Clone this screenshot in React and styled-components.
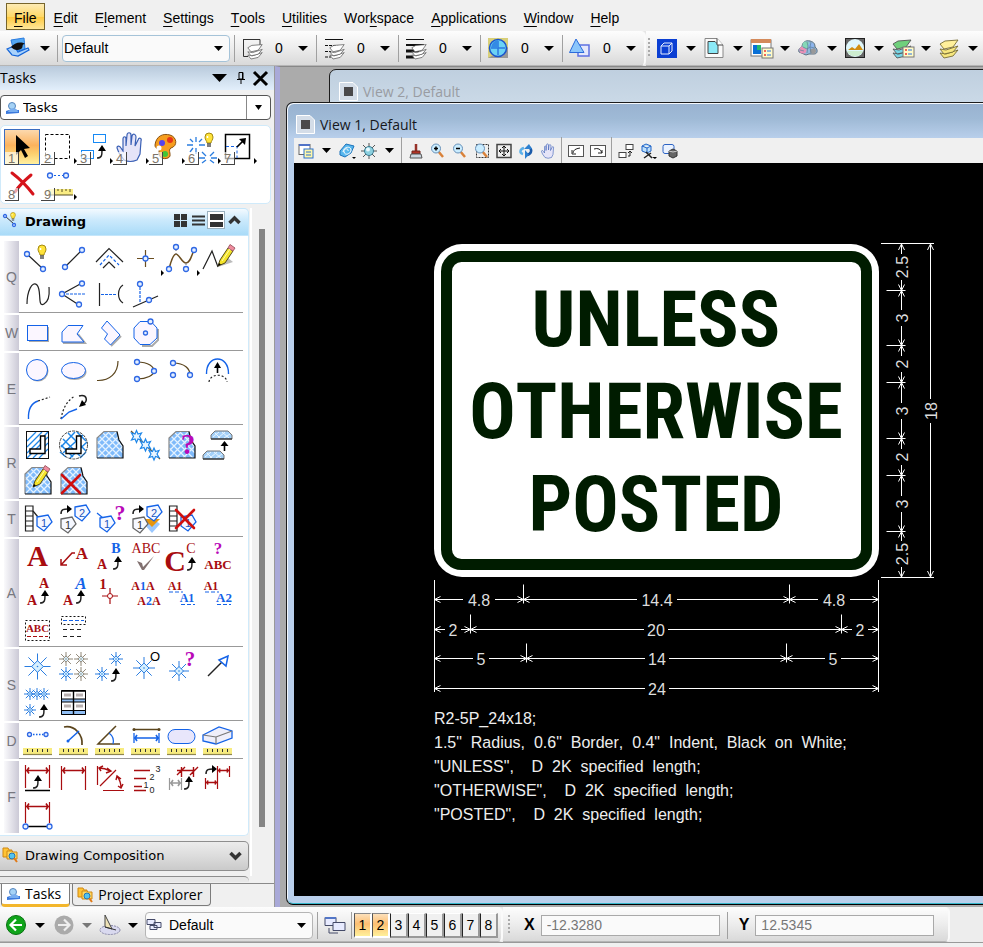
import React from 'react';
import styled, { createGlobalStyle } from 'styled-components';

const Global = createGlobalStyle`
  * { box-sizing: border-box; }
  body { margin: 0; background: #f0f0f0; color: #000; font: 14px/18px "Liberation Sans", Arial, sans-serif; font-kerning: none; overflow: hidden; }
  button, select, input { font: inherit; font-kerning: inherit; color: inherit; margin: 0; }
  button { border: 0; padding: 0; background: none; cursor: default; }
  svg { display: block; flex: none; overflow: visible; }
`;

const BLUE = '#1463e8';
const RED = '#a80d10';

/* ---------- layout ---------- */
const Page = styled.div`display: flex; flex-direction: column; height: 100vh; overflow: hidden;`;
const MenuBar = styled.nav`display: flex; gap: 1px; height: 31px; padding: 3px 0 1px 6px; background: #f0f0f0;`;
const MenuItem = styled.button`
  padding: 1px 7px 0; border: 1px solid ${p => (p.$active ? '#77652c' : 'transparent')};
  background: ${p => (p.$active ? 'linear-gradient(#fdebb5, #ffd968 50%, #fec93f 52%, #ffe79a)' : 'none')};
  line-height: 26px;
  u { text-underline-offset: 3px; }
`;
const ToolStrip = styled.div`display: flex; height: 35px; flex: none; background: #e6e6e6; overflow: hidden;`;
const Strip = styled.div`
  display: flex; align-items: center; flex: none; padding: ${p => p.$top || 0}px ${p => p.$end || 0}px 0 ${p => p.$pad || 0}px;
  background: linear-gradient(#fdfdfd, #ededed 50%, #d9d9d9); border-bottom: 1px solid #b5b5b5;
  border-right: 2px solid #fafafa; border-radius: 0 5px 5px 0; flex-grow: ${p => (p.$grow ? 1 : 0)};
`;
const Bar = styled.i`width: 1px; height: 27px; background: #a0a0a0; flex: none; margin: ${p => p.$m || '0'};`;
const Grip = styled.i`width: 2px; height: 20px; margin-left: ${p => p.$left || 0}px; flex: none; background: repeating-linear-gradient(#aaa 0 2px, transparent 2px 4px);`;
const IconButton = styled.button`display: flex; align-items: center; justify-content: center; width: ${p => p.$w || 22}px; height: 24px; flex: none;`;
const Attr = styled.button`display: flex; align-items: center; width: 81px; height: 27px; padding-left: 6px; flex: none;
  span { width: 35px; padding-left: 12px; text-align: left; }`;
const Drop = styled.button`display: flex; align-items: center; width: 47px; height: 27px; gap: 7px; flex: none;`;
const PrimaryRow = styled.div`display: flex; margin-left: 7px;`;
const SelectWrap = styled.div`
  position: relative; display: flex; align-items: center; flex: none; width: ${p => p.$w}px; height: 27px;
  margin-left: ${p => p.$gap || 0}px; border: 1px solid ${p => p.$c || '#a9c1d6'}; border-radius: 4px; background: #fafafa;
  & > svg:last-child { position: absolute; right: 6px; pointer-events: none; }
  select { appearance: none; border: 0; outline: 0; background: transparent; flex: 1; height: 25px; padding: 0 20px 0 ${p => p.$left || 1}px; }
`;
const Body = styled.div`display: flex; flex: 1; min-height: 0;`;

/* ---------- task pane ---------- */
const Pane = styled.aside`display: flex; flex-direction: column; width: 275px; flex: none; border-right: 1px solid #999; background: #f0f0f0; overflow: hidden;`;
const PaneTitle = styled.header`
  display: flex; align-items: center; height: 24px; flex: none; background: linear-gradient(#b9cadc, #e2effb);
  font: 14px/22px "Open Sans", sans-serif; padding-right: 5px;
  h2 { font: inherit; margin: 0; flex: 1; }
`;
const Combo = styled.div`
  position: relative; display: flex; align-items: center; height: 25px; margin: 5px 3px 5px 0; padding-left: 4px; flex: none;
  border: 1px solid #555; border-radius: 4px; background: #fff;
  font: 13px "DejaVu Sans", Verdana, sans-serif;
  select { appearance: none; border: 0; outline: 0; background: none; flex: 1; padding: 0 0 0 3px; }
  i { width: 24px; height: 23px; border-left: 1px solid #888; display: flex; align-items: center; justify-content: center; pointer-events: none; }
`;
const Shelf = styled.div`
  display: grid; grid-template-columns: repeat(7, 36px); grid-auto-rows: 36px; margin: 0 3px 4px 0; padding: 3px; flex: none; height: 79px;
  background: #fff; border: 1px solid #d0eafa; border-radius: 5px;
`;
const ShelfTool = styled.button`
  position: relative; width: 36px; height: 36px; border: 1px solid ${p => (p.$on ? '#3a6cc0' : 'transparent')};
  background: ${p => (p.$on ? 'linear-gradient(#fcd9ae, #fcb25d 45%, #fdd06f 70%, #fff0a0)' : 'none')};
  svg { margin: -1px; }
  span { position: absolute; left: 0; bottom: -1px; width: 14px; height: 13px; background: #ffffffa0; border: solid #444; border-width: 0 1px 1px 0;
    color: #7c7468; font-size: 13px; line-height: 13px; }
`;
const Scroll = styled.div`display: flex; flex: 1; min-height: 0; overflow: hidden;`;
const Boxes = styled.div`width: 249px; flex: none;`;
const Track = styled.div`flex: 1; border-left: 2px solid #fff; padding: 21px 0 0 7px; margin: 0 0 7px 1px;
  &::before { content: ''; display: block; width: 6px; height: 598px; background: #858585; }`;
const BoxHead = styled.header`
  display: flex; align-items: center; height: 28px; padding: 0 5px 4px 3px; border: 1px solid #c5e6fa; border-left: 0; border-radius: 0 5px 0 0;
  background: linear-gradient(#f3faff, #cdeafc 40%, #a9dbf8);
  h3 { flex: 1; margin: 3px 0 0 7px; font: bold 13px/22px "DejaVu Sans", Verdana, sans-serif; }
`;
const HeadButton = styled.button`
  display: flex; align-items: center; justify-content: center; width: 18px; height: 18px;
  border: 1px solid ${p => (p.$on ? '#9bb1bf' : 'transparent')}; background: ${p => (p.$on ? '#fff' : 'none')};
`;
const Groups = styled.div`padding: 5px 0 2px 4px; background: #fff; border: 1px solid #d0eafa; border-width: 0 1px 1px 0; border-radius: 0 0 5px 0;`;
const Group = styled.section`display: flex; width: 239px; border-bottom: ${p => (p.$last ? 0 : 2)}px solid #fff; box-shadow: ${p => (p.$last ? 'none' : 'inset 0 -1px #999')};`;
const Key = styled.div`display: flex; align-items: center; justify-content: center; width: 15px; color: #77777f; font-size: 14px; background: linear-gradient(90deg, #fafafc, #cbc9d6);`;
const Tools = styled.div`display: grid; grid-template-columns: repeat(6, 36px); grid-auto-rows: 36px;`;
const Tool = styled.button`width: 36px; height: 36px;`;
const Collapsed = styled.button`
  display: flex; align-items: center; width: 249px; height: 30px; margin-top: 5px; padding: 0 6px 2px 2px; text-align: left;
  border: 1px solid #8e8e8e; border-left: 0; border-radius: 0 5px 5px 0; background: linear-gradient(#ececec, #dcdcdc 50%, #cacaca);
  font: 13px "DejaVu Sans", Verdana, sans-serif;
  span { flex: 1; padding-left: 6px; }
`;
const Peek = styled.div`height: 6px; margin-top: 5px; border-top: 1px solid #8e8e8e; border-radius: 0 5px 0 0; background: #e8e8e8;`;
const Tabs = styled.div`display: flex; gap: 2px; height: 24px; flex: none; padding-left: 1px; border-top: 1px solid #8a8a8a;`;
const Tab = styled.button`
  display: flex; align-items: center; gap: 4px; height: 22px; padding: 0 8px 0 4px; font: 14px/20px "Open Sans", sans-serif;
  border: 1px solid #7c7c7c; border-top: 0; border-radius: 0 0 4px 4px;
  ${p => (p.$on ? 'background: #fff; height: 23px; border-bottom: 3px solid #f3b62c;' : 'background: #ececec;')}
`;

/* ---------- views ---------- */
const Desk = styled.main`position: relative; flex: 1; min-width: 0; background: #ababab; border-left: 5px solid #a9a9d8; overflow: hidden; border-top: 1px solid #888;`;
const View = styled.section`
  position: absolute; display: flex; flex-direction: column; right: -10px; border: 1px solid #1c1c1c; border-radius: 7px;
  ${p => (p.$back
    ? 'left: 49px; top: 2px; height: 60px; background: linear-gradient(#bfcfdf, #c9d8e6 50%, #d5e1ef);'
    : 'left: 6px; top: 35px; bottom: 2px; background: linear-gradient(#98b2d0, #9fbad6 16px, #bad0ec 36px); border-bottom-color: #000; box-shadow: inset 1px 1px #f4f8fc, inset 0 -1px #35b8cc; padding: 0 7px 8px;')}
`;
const ViewTitle = styled.header`
  display: flex; align-items: center; gap: 5px; height: 35px; flex: none; padding: ${p => (p.$back ? '8px 0 0 9px' : '8px 0 0 2px')};
  color: ${p => (p.$back ? '#999ca2' : '#16181c')}; font: 14px "Open Sans", sans-serif;
  h2 { font: inherit; margin: 0; }
`;
const ViewTools = styled.div`display: flex; align-items: center; height: 25px; flex: none; padding-left: 1px; background: #f0f0f0;`;
const Canvas = styled.div`flex: 1; min-height: 0; background: #000; padding: 72px 0 0 136px; overflow: hidden;`;
const Notes = styled.div`margin: 12px 0 0 4px; color: #eee; font-size: 16px; line-height: 24px; white-space: pre;
  p { margin: 0; }`;

/* ---------- status ---------- */
const Status = styled.footer`display: flex; height: 35px; flex: none; background: #ededed; overflow: hidden;`;
const Foot = styled.div`height: 5px; flex: none; border-top: 1px solid #999; background: #f0f0f0;`;
const ViewToggle = styled.button`
  width: 18px; height: 25px; flex: none; border: 1px solid; border-width: 1px 2px 2px 1px;
  border-color: ${p => (p.$on ? '#888 #fff #fff #555' : '#fff #999 #999 #222')};
  background: ${p => (p.$on ? 'linear-gradient(#fce0bb, #fdbf72 45%, #fff09a)' : '#f0f0f0')};
`;
const Coord = styled.label`display: flex; align-items: center; font-weight: bold; font-size: 16px; padding-left: ${p => p.$left}px;
  input { width: 179px; height: 21px; margin-left: 6px; padding: 0 5px; border: 1px solid #a9a9a9; background: #fafafa; color: #777; font-weight: normal; font-size: 14px; }`;

/* ---------- drawing primitives ---------- */
const Svg = ({ w = 36, h = w, box, children }) => (
  <svg width={w} height={h} viewBox={box || `0 0 ${w} ${h}`} fill="none" aria-hidden="true">{children}</svg>
);
const L = ({ d, c = '#222', w = 1.2, dash, f = 'none' }) => <path d={d} stroke={c} strokeWidth={w} strokeDasharray={dash} fill={f} />;
const N = ({ x, y, r = 2.5 }) => <circle cx={x} cy={y} r={r} fill="#e6f0ff" stroke="#2f68e4" strokeWidth="1.3" />;
const T = ({ x, y, s = 13, c = RED, f = 'Liberation Serif', b = 'bold', children }) => (
  <text x={x} y={y} fontSize={s} fontFamily={`"${f}", serif`} fontWeight={b} textAnchor="middle" fill={c}>{children}</text>
);
const Caret = ({ w = 9, c = '#000' }) => <svg width={w} height="5" viewBox="0 0 10 5" preserveAspectRatio="none" aria-hidden="true"><path d="M0 0H10L5 5Z" fill={c} /></svg>;
const Fly = () => <path d="M34 29l3 3-3 3z" fill="#000" />;
const Bulb = ({ x, y }) => (
  <g transform={`translate(${x} ${y})`}>
    <path d="M-2 4C-2 2-4 1-4-2a4 4 0 0 1 8 0C4 1 2 2 2 4Z" fill="#ffe33a" stroke="#a58a10" />
    <path d="M-1.5-3v2" stroke="#fff" strokeWidth="1.5" /><path d="M-2 5h4M-2 7h4" stroke="#555" strokeWidth="1.4" />
  </g>
);
const Pencil = ({ x, y }) => (
  <g transform={`translate(${x} ${y})`}>
    <path d="M0 0l2-6L10-18l5 3L7-3Z" fill="#f4e429" stroke="#544b1a" />
    <path d="M10-18l5 3 2-3-5-3.500Z" fill="#f08b9e" stroke="#a4606c" /><path d="M0 0l1-3 2 1.500Z" fill="#000" /><path d="M4-5l8-12" stroke="#fffbb0" />
  </g>
);
const Cross = ({ x, y, r = 9 }) => <path d={`M${x - r} ${y - r}L${x + r} ${y + r}M${x - r} ${y + r}L${x + r} ${y - r}`} stroke="#d0100f" strokeWidth="2.600" strokeLinecap="round" />;
const Up = ({ x, y }) => <g transform={`translate(${x} ${y})`}><path d="M-4 6C1 6 1 3 1-2" stroke="#222" strokeWidth="1.500" /><path d="M-3-1l4-6 4 6Z" fill="#000" /></g>;
const Right = ({ x, y }) => <g transform={`translate(${x} ${y})`}><path d="M-5 4C-5-1-2-1 2-1" stroke="#222" strokeWidth="1.500" /><path d="M1-5l5 4-5 4Z" fill="#000" /></g>;
const Star = ({ x, y, r = 7, c = '#2a7de0' }) => (
  <g transform={`translate(${x} ${y})`} stroke={c}>
    <path d={`M0${-r}V${r}M${-r} 0H${r}M${-r * 0.7} ${-r * 0.7}L${r * 0.7} ${r * 0.7}M${-r * 0.7} ${r * 0.7}L${r * 0.7} ${-r * 0.7}`} />
    <path d={`M0${-r * 0.45}L${r * 0.45} 0 0 ${r * 0.45}${-r * 0.45} 0Z`} fill="#d6f0ff" /><circle r=".8" fill={c} stroke="none" />
  </g>
);
const Burst = ({ x, y }) => <path transform={`translate(${x} ${y})`} d="M0-6L1.500-2.500 5-3.500 3 0 5 3.500 1.500 2.500 0 6-1.500 2.500-5 3.500-3 0-5-3.500-1.500-2.500Z" fill="#eaf6ff" stroke="#1f87e8" strokeWidth="1.200" />;
const Tag = ({ x, y, n, c = BLUE }) => (
  <g transform={`translate(${x} ${y})`}><path d="M-7-6L4-8 8-1 0 8-7 3Z" fill="#f6f8ff" stroke={c} strokeWidth="1.300" />
    <text y="4" fontSize="11" textAnchor="middle" fill={c === BLUE ? '#2455bd' : '#333'} fontFamily="Liberation Sans">{n}</text></g>
);
const Ladder = () => <L d="M6.500 5h7.500v25H6.500ZM6.500 10H14M6.500 15H14M6.500 20H14M6.500 25H14" />;
const Hatched = () => (
  <g>
    <path d="M6 11L13 4.500H26L28 13 32 19V31H6Z" fill="#7fbafa" />
    <path d="M6 21L16 31M6 14L23 31M8 9L30 31M12 6L32 26M17 5L32 20M6 17L18 5M6 24L25 5M7 30L28 9M13 31L30 14M20 31L32 19" stroke="#e4f2ff" strokeWidth="1.200" />
    <L d="M6 31V11L13 4.500H26" c="#888" /><L d="M26 4.500L28 13 32 19V31H6" c="#111" />
  </g>
);
const Ell = () => <path d="M21.500 9H26V26.500H11V22H21.500Z" fill="#fff" stroke="#000" strokeWidth="1.400" />;
const Ruler = () => <g><rect x="4" y="25" width="29" height="6" fill="#f8ec80" /><L d="M4 31.500H33" c="#8f8650" /><path d="M8.500 26v3M13.500 26v3M18.500 26v3M23.500 26v3M28.500 26v3" stroke="#333" /></g>;
const Dim2 = ({ x1, x2, y, c = RED, a = 3 }) => <path d={`M${x1} ${y}H${x2}M${x1 + a} ${y - a}L${x1 + 1} ${y}l${a - 1} ${a}M${x2 - a} ${y - a}L${x2 - 1} ${y}l${1 - a} ${a}`} stroke={c} strokeWidth="1.600" />;
const Fill = '#fbf6ff';

const icons = {
  'Smart line': <><L d="M8 13L24 28" /><N x={8} y={13} /><N x={24} y={28} /><Bulb x={23} y={10} /></>,
  'Line': <><L d="M10 26L27 9" /><N x={10} y={26} /><N x={27} y={9} /></>,
  'Multi-line': <><L d="M5 21L18 7.500 32 21M12 27L18 21 24 27" /><L d="M9 24L18 14 28 24" c={BLUE} dash="3 2" /></>,
  'Point': <><L d="M10 17.500H27M18.500 9V26" c="#6b4e20" /><N x={18.500} y={17.500} /><Fly /></>,
  'Curve': <><L d="M6 28C8 20 10 13 13 13S19 22 23 22 28 16 31 9" c="#6b4e20" w={1.500} /><L d="M13 8V13M23 22V26" dash="2 2" c="#888" /><N x={13} y={6} /><N x={31} y={9} /><N x={6} y={28} /><N x={23} y={28} /><Fly /></>,
  'Sketch': <><path d="M19 26l10-9 5 4Z" fill="#bbb" /><L d="M4 28L13 10 19 26" /><Pencil x={19} y={25} /></>,
  'Stream curve': <L d="M8 27C8 15 13 3 18 8S18 31 25 27 30 13 30 10" />,
  'Bisector': <><L d="M7 17L27 6M7 17L24 28" /><L d="M7 17H31" c={BLUE} dash="3 1" /><N x={7} y={17} /><N x={27} y={6.500} /><N x={24} y={27.500} /></>,
  'Minimum line': <><L d="M8.500 6V29M32 8C26 12 26 22 32 26" /><L d="M10 17.500H26" c={BLUE} dash="3 1" /></>,
  'Angle line': <><L d="M6 30L31 19" /><L d="M13 10V26" c={BLUE} dash="3 1" /><N x={13} y={7} /><N x={22} y={23} /></>,
  'Block': <><rect x="10" y="12" width="20" height="15" fill="#aaa" /><rect x="8.500" y="10.500" width="20" height="15" fill={Fill} stroke={BLUE} /></>,
  'Shape': <><path d="M8 28H30L23 19" stroke="#aaa" strokeWidth="2" /><path d="M7 17L13 10.500H28L22 19 29 27H7Z" fill={Fill} stroke={BLUE} /></>,
  'Orthogonal shape': <><path d="M30 21L20 31" stroke="#aaa" strokeWidth="2" /><path d="M10.500 13L16 6 29 20 19.500 30 13.500 24 16.500 19Z" fill={Fill} stroke={BLUE} /></>,
  'Polygon': <><path d="M15 31H25L31 25V14" stroke="#aaa" strokeWidth="2" /><path d="M13 6.500H24L30 13V23L23 29.500H13L7 23V13Z" fill={Fill} stroke={BLUE} /><N x={18.500} y={18} r={2} /><N x={23.500} y={6.500} /></>,
  'Circle': <><circle cx="19" cy="18" r="10.500" fill="#aaa" /><circle cx="18" cy="17" r="10.500" fill={Fill} stroke={BLUE} /></>,
  'Ellipse': <><ellipse cx="19.500" cy="19" rx="12" ry="8" fill="#aaa" /><ellipse cx="18.500" cy="17.500" rx="12" ry="8" fill={Fill} stroke={BLUE} /></>,
  'Arc': <L d="M6 27.500C19 28 27 20 27 8" c="#5b451d" />,
  'Half ellipse': <><L d="M10 9C22 9 27 14 27 18S20 26 10 26" c="#5b451d" /><N x={10} y={9} /><N x={27} y={18} /><N x={10} y={26} /></>,
  'Quarter ellipse': <><L d="M10 10C22 10 27 16 27 22" c="#5b451d" /><N x={10} y={10} /><N x={10} y={22} /><N x={27} y={22} /></>,
  'Modify arc radius': <><L d="M7.500 21C7 1 30 1 29.500 21" c={BLUE} w={1.400} /><L d="M10 29C11 20 27 20 28 29" dash="2 2" /><path d="M18.500 20V12" stroke="#000" strokeWidth="1.600" /><path d="M15 15l3.500-6L22 15Z" fill="#000" /></>,
  'Modify arc angle': <><L d="M9.500 30C9 20 13 14 19 12" c={BLUE} w={1.400} /><L d="M19 12L31 8" dash="2 2" /></>,
  'Modify arc axis': <><L d="M6 30C8 18 13 11 20 7" dash="2 2" /><L d="M6 30L14 23 22 20" c={BLUE} w={1.400} /><L d="M24 7C32 5 34 12 27 16" w={1.500} /><path d="M24 18l3-7 4 5Z" fill="#000" /></>,
  'Hatch area': <><path d="M8 14L17 5M8 20L23 5M8 26L29 5M8 31L29 10M14 31L29 16M20 31L29 22" stroke="#1f87e8" strokeWidth="1.300" /><rect x="7.500" y="4.500" width="22" height="27" stroke="#111" /><Ell /></>,
  'Crosshatch area': <><path d="M8 12L25 29M13 6L31 24M22 5L31 14M6 18L18 30M6 20L20 5M8 26L28 8M15 31L32 15M25 31L31 25M5 25L11 30" stroke="#1f87e8" strokeWidth="1.500" /><circle cx="18.500" cy="18" r="14" stroke="#444" strokeDasharray="3 1" /><Ell /></>,
  'Pattern area': <Hatched />,
  'Linear pattern': <><L d="M4 4L33 32" c="#6b4e20" /><Burst x={9.500} y={9.500} /><Burst x={18.500} y={18} /><Burst x={27} y={27} /></>,
  'Show pattern': <><Hatched /><T x={25} y={27} s={29} c="#b909b9">?</T></>,
  'Match pattern': <>{[[11, 3], [3, 23]].map(([x, y]) => <g key={x} transform={`translate(${x} ${y})`}><path d="M1 9V5L5 1H18L22 5V9Z" fill="#a4d0f8" stroke="#777" /><path d="M3 7L9 2M8 8L15 2M14 8L20 4M5 3L10 8M12 2L19 8" stroke="#e9f6ff" /><path d="M1 9H22" stroke="#111" /></g>)}<path d="M25.500 24V17" stroke="#000" strokeWidth="1.600" /><path d="M21.500 19l4-5 4 5Z" fill="#000" /></>,
  'Change pattern': <><Hatched /><Pencil x={14} y={24} /></>,
  'Delete pattern': <><Hatched /><Cross x={16} y={21} /></>,
  'Place note': <><Ladder /><L d="M14 10L19 16" /><Tag x={25} y={22} n="1" /></>,
  'Copy tag': <><Tag x={27} y={12} n="2" /><Tag x={13} y={24} n="1" c="#666" /><Right x={11} y={9} /></>,
  'Tag query': <><L d="M6 12L12 17" c={BLUE} /><Tag x={16} y={23} n="1" /><T x={29} y={19} s={22} c="#b909b9">?</T></>,
  'Tag layers': <><path d="M17 23l8-6 8 6-8 9Z" fill="#9bc8ff" /><path d="M17 18h16l-8 8Z" fill="#e7950e" /><Tag x={27} y={12} n="2" /><Tag x={13} y={24} n="1" c="#666" /><Right x={11} y={9} /></>,
  'Detach tag': <><Ladder /><Tag x={25} y={22} n="1" /><Cross x={22} y={18} /></>,
  'Place text': <T x={18.500} y={27} s={29}>A</T>,
  'Text leader': <><T x={27} y={20} s={17}>A</T><L d="M20 14H17L6 26M6 20V26H12" c={RED} w={1.500} /></>,
  'Edit text': <><T x={25} y={14} s={14} c={BLUE}>B</T><T x={11} y={30} s={14}>A</T><Up x={26} y={24} /></>,
  'Spell check': <><T x={19} y={14} s={14} b="normal">ABC</T><path d="M10 22l5 2 1 4L27 17 17 31 15 31Z" fill="#81706f" /></>,
  'Change case': <><T x={12} y={32} s={30}>C</T><T x={28} y={14} s={14} b="normal">C</T><Up x={28} y={25} /></>,
  'Find text': <><T x={19} y={15} s={17} c="#b909b9">?</T><T x={19} y={30} s={13}>ABC</T></>,
  'Match text': <><T x={25} y={13} s={14}>A</T><T x={13} y={30} s={14}>A</T><Up x={25} y={22} /></>,
  'Change text': <><text x="26" y="14" fontSize="17" fontStyle="italic" fontFamily="Liberation Serif" fontWeight="bold" textAnchor="middle" fill={BLUE}>A</text><T x={13} y={30} s={14}>A</T><Up x={25} y={22} /></>,
  'Text node': <><T x={12} y={14} s={15}>1</T><L d="M19 13V29M11 21H27" c={RED} /><circle cx="19" cy="21" r="2.500" fill="#fff" stroke={RED} /></>,
  'Increment text': <><T x={16} y={15} s={12}>A<tspan fill={BLUE}>1</tspan>A</T><T x={22} y={30} s={12}>A<tspan fill={BLUE}>2</tspan>A</T></>,
  'Enter field': <><T x={12} y={15} s={12}>A1</T><T x={24} y={27} s={12} c={BLUE}>A1</T><L d="M6 17H20M18 29.500H32" c={BLUE} dash="4 2" /></>,
  'Fill field': <><T x={12} y={15} s={12}>A1</T><T x={25} y={27} s={13} c={BLUE}>A2</T><L d="M6 17H20M18 29.500H32" c={BLUE} dash="4 2" /></>,
  'Text block': <><rect x="6.500" y="9.500" width="24" height="20" stroke="#111" strokeDasharray="2 2" /><T x={18.500} y={21} s={11}>ABC</T><L d="M8 25.500H29" c={RED} dash="4 2" /></>,
  'Column text': <><rect x="6.500" y="5.500" width="24" height="8" stroke="#111" strokeDasharray="2 2" /><L d="M8 9.500H29" c={BLUE} dash="4 2" /><L d="M8 18.500H29M8 25.500H29" dash="4 3" /></>,
  'Place cell': <Star x={18.500} y={17.500} r={13} />,
  'Cell matrix': <><Star x={11} y={10} c="#918879" /><Star x={26} y={10} c="#918879" /><Star x={11} y={25} /><Star x={26} y={25} c="#918879" /></>,
  'Replace cell': <><Star x={25} y={10} /><Star x={11} y={25} /><Up x={24} y={26} /></>,
  'Cell origin': <><Star x={17} y={19} r={11} /><T x={28} y={12} s={13} c="#000" f="Liberation Sans" b="normal">O</T></>,
  'Identify cell': <><Star x={16} y={22} r={10} /><T x={27} y={17} s={21} c="#b909b9">?</T></>,
  'Line terminator': <><L d="M9 27L26 10" w={1.500} /><path d="M20 11L29 7 27 17Z" fill="#fff" stroke={BLUE} strokeWidth="1.500" /></>,
  'Multi cell': <><Star x={11} y={9} r={6} /><Star x={18} y={9} r={6} /><Star x={25} y={9} r={6} /><Star x={11} y={25} r={6} /><Up x={24} y={26} /></>,
  'Cell table': <><path d="M6.500 5.500h24v24h-24Z" fill="#fff" stroke="#000" /><path d="M6.500 14h24v3h-24ZM6.500 25.500h24v4h-24Z" fill="#91bff5" stroke="#000" /><path d="M18.500 5V30M6.500 6h24" stroke="#000" strokeWidth="1.400" /><path d="M9 10h7M21 10h7M9 21h7M21 21h7" stroke="#b9b1b1" strokeWidth="3" /></>,
  'Measure distance': <><L d="M11 11.500H27" c={BLUE} dash="1.500 1.500" w={1.500} /><N x={10.500} y={11.500} r={2} /><N x={27} y={11.500} r={2} /><Ruler /></>,
  'Measure radius': <><L d="M9 4C20 2 28 12 27 22" c="#5b451d" w={1.700} /><L d="M13 18L24 8" c={BLUE} w={1.500} /><circle cx="13" cy="18" r="1.500" fill={BLUE} /><Ruler /></>,
  'Measure angle': <><L d="M29 21H7L25 3" c="#5b451d" w={1.500} /><L d="M18 10C22 13 23 17 22 21" c={BLUE} /><Ruler /></>,
  'Measure length': <><L d="M7 6.500H32" c="#5b451d" w={1.500} /><circle cx="7" cy="6.500" r="1.500" fill="#5b451d" /><circle cx="32" cy="6.500" r="1.500" fill="#5b451d" /><L d="M7 10V20M32 10V20" c={BLUE} w={1.300} /><Dim2 x1={7} x2={32} y={15} c={BLUE} /><Ruler /></>,
  'Measure area': <><rect x="5" y="6.500" width="27" height="14" rx="7" fill="#e8e6fb" stroke={BLUE} /><Ruler /></>,
  'Measure volume': <><path d="M4 12L20 4 33 8V15L17 21 4 18Z" fill="#efeffa" stroke={BLUE} strokeWidth="1.300" /><L d="M4 12L17 14 33 8M17 14V21" c="#777" /><Ruler /></>,
  'Dimension element': <><L d="M6.500 4V27M30.500 4V27" c={RED} /><Dim2 x1={7} x2={30} y={9.500} /><Up x={18} y={21} /><L d="M6 29.500H31" w={1.500} c="#000" /></>,
  'Dimension linear': <><L d="M6.500 5V29M30.500 5V29" c={RED} /><Dim2 x1={7} x2={30} y={9.500} /></>,
  'Dimension angular': <><L d="M6.500 5V24M9 25L25 9M12 29.500H33" c={RED} /><L d="M8 7Q14 7 19 10M16 7l4 3-5 2M10 10L8 7l4-2M26 15Q30 20 30 27M25 19l1-4 4 3M27 25l3 2 2-4" c={RED} w={1.400} /></>,
  'Ordinate dimension': <><L d="M7 9.500H23M7 17.500H19M7 25.500H15M7 29.500H19" c={RED} w={1.500} /><T x={31} y={11} s={9} c="#222" f="Liberation Sans" b="normal">3</T><T x={25} y={19} s={9} c="#222" f="Liberation Sans" b="normal">2</T><T x={19} y={27} s={9} c="#222" f="Liberation Sans" b="normal">1</T><T x={25} y={32} s={9} c="#222" f="Liberation Sans" b="normal">0</T></>,
  'Change dimension': <><L d="M18.500 6V16M30.500 6V16M14 14L22 6M27 14L35 6M14 9.500H31" c={RED} w={1.400} /><L d="M6.500 17V29M18.500 17V29" c="#999" /><Dim2 x1={7} x2={18} y={22} c="#999" /><Up x={25} y={22} /></>,
  'Match dimension': <><Right x={12} y={9} /><L d="M18.500 5V28M30.500 5V16M6.500 17V28" c={RED} /><Dim2 x1={19} x2={30} y={9.500} a={2} /><Dim2 x1={7} x2={18} y={21.500} a={2} /></>,
  'Reassociate dimension': <><L d="M6.500 5V26M30.500 5V26" c={RED} /><Dim2 x1={7} x2={30} y={9.500} /><L d="M8 29.500H29" w={1.500} c="#000" /><N x={6.500} y={29.500} /><N x={30.500} y={29.500} /></>,
};

const groups = [
  ['Q', ['Smart line', 'Line', 'Multi-line', 'Point', 'Curve', 'Sketch', 'Stream curve', 'Bisector', 'Minimum line', 'Angle line']],
  ['W', ['Block', 'Shape', 'Orthogonal shape', 'Polygon']],
  ['E', ['Circle', 'Ellipse', 'Arc', 'Half ellipse', 'Quarter ellipse', 'Modify arc radius', 'Modify arc angle', 'Modify arc axis']],
  ['R', ['Hatch area', 'Crosshatch area', 'Pattern area', 'Linear pattern', 'Show pattern', 'Match pattern', 'Change pattern', 'Delete pattern']],
  ['T', ['Place note', 'Copy tag', 'Tag query', 'Tag layers', 'Detach tag']],
  ['A', ['Place text', 'Text leader', 'Edit text', 'Spell check', 'Change case', 'Find text', 'Match text', 'Change text', 'Text node', 'Increment text', 'Enter field', 'Fill field', 'Text block', 'Column text']],
  ['S', ['Place cell', 'Cell matrix', 'Replace cell', 'Cell origin', 'Identify cell', 'Line terminator', 'Multi cell', 'Cell table']],
  ['D', ['Measure distance', 'Measure radius', 'Measure angle', 'Measure length', 'Measure area', 'Measure volume']],
  ['F', ['Dimension element', 'Dimension linear', 'Dimension angular', 'Ordinate dimension', 'Change dimension', 'Match dimension', 'Reassociate dimension']],
];

const Hand = <path d="M12 31L7 24 5 19C5 16 8 17 9 19L11 22V10C11 7 14 7 14 10V17L15 6C15 3 19 3 19 6V16L20 7C21 4 24 5 24 8L23 17 26 11C27 8 30 9 29 12L28 25 25 31Q18 34 12 31Z" fill="#e5e4f8" stroke="#3a60b5" strokeWidth="1.200" />;
const shelf = [
  ['Element selection', <path d="M12 6V26L17 21 21 29 24 27 20 20 26 19Z" fill="#000" />],
  ['Place fence', <><rect x="5.500" y="5.500" width="24" height="24" stroke="#000" strokeDasharray="3 2" /><Fly /></>],
  ['Move', <><rect x="17.500" y="5.500" width="12" height="8" stroke="#1689f5" /><rect x="5.500" y="21.500" width="12" height="8" stroke="#1689f5" /><Up x={25} y={23} /><Fly /></>],
  ['Manipulate', <>{Hand}<Fly /></>],
  ['Change attributes', <><path d="M7 16C8 7 15 4 22 6S30 17 23 19C19 21 25 27 20 29S10 28 11 23 7 21 7 16Z" fill="#f69d1e" stroke="#8a5210" /><circle cx="14" cy="14" r="3" fill="#5443ec" /><circle cx="22" cy="11" r="3" fill="#e73519" /><circle cx="11" cy="19" r="2.500" fill="#fff" /><circle cx="17" cy="25" r="3" fill="#43c536" /><Fly /></>],
  ['Groups', <><path d="M3 16H9M15 16H21M12 8V13M12 19V25M6 10L9 13M18 10L15 13M6 23L9 19M15 29H21M27 29H33M18 23L22 27M30 23L26 27M18 34L22 31M30 34L26 31" stroke="#2a7de0" strokeWidth="1.300" /><Bulb x={25} y={10} /><Fly /></>],
  ['Modify', <><rect x="5.500" y="5.500" width="24" height="24" stroke="#000" strokeWidth="1.500" /><path d="M6 17.500H17V29" stroke={BLUE} strokeDasharray="3 2" /><path d="M17 18L24 11" stroke="#000" strokeWidth="1.700" /><path d="M19 10l7-1-1 7Z" fill="#000" /><Fly /></>],
  ['Delete', <path d="M8 8C16 14 22 20 29 29M27 10C20 16 14 22 11 27" stroke="#d5141b" strokeWidth="3" strokeLinecap="round" />],
  ['Measure', <><L d="M10 10.500H26" c={BLUE} dash="2 2" /><N x={10} y={10.500} /><N x={26} y={10.500} /><rect x="8" y="24" width="25" height="6" fill="#f9ec83" /><path d="M18 24v2M22 24v3M26 24v2M30 24v3M8 30H33" stroke="#554d22" /><Fly /></>],
];

const Stack = ({ top = '#fff', fill = '#fff', s = '#555' }) => (
  <g stroke={s} strokeWidth=".9"><path d="M1 15L7 16 19 12 14 18 5 20Z" fill={fill} /><path d="M1 11L7 12 19 8 14 14 5 16Z" fill={fill} /><path d="M1 6L6 3 19 2 14 9 5 11Z" fill={top} /></g>
);
const MiniStack = () => <g transform="translate(6 6) scale(.8)"><Stack /></g>;
const Form = ({ x = 10, y = 9 }) => <g transform={`translate(${x} ${y})`}><rect width="11" height="10" fill="#fffbc8" stroke="#777" /><path d="M2 3h2M2 7h2" stroke="#e33" strokeWidth="1.500" /><path d="M5 3h4M5 7h4" stroke="#2a70e0" /></g>;

const attrs = [
  ['Active level', <><path d="M2 2.500H19V10M2.500 2V19.500H7" stroke="#333" /><MiniStack /></>],
  ['Line style', <><path d="M2 2.500H20" stroke="#111" /><path d="M2 8.500H20M2 14.500H8M2 20H8" stroke="#111" strokeDasharray="3 1" /><MiniStack /></>],
  ['Line weight', <><path d="M1 2.500H19" stroke="#111" /><path d="M1 8H19" stroke="#111" strokeWidth="2" /><path d="M1 14H14M1 20H9" stroke="#111" strokeWidth="3" /><MiniStack /></>],
  ['Transparency', <><rect x="1" y="1" width="20" height="20" fill="#d8cf78" /><path d="M1 21L21 21V10Z" fill="#999" /><circle cx="11" cy="11" r="8.500" fill="#6cd3f5" stroke="#1b55cc" strokeWidth="1.500" /><path d="M11 4V18M4 11H18" stroke="#2d7ae0" strokeWidth="1.500" /><path d="M11 3v8H4a8 8 0 0 1 7-8Z" fill="#348be4" /></>],
  ['Priority', <><rect x="9" y="8" width="11" height="11" fill="#e5e8fb" stroke="#5d70e2" strokeWidth="1.500" /><path d="M.5 15.500L7 2 15 15.500Z" fill="#8bc6fb" stroke="#2b6bdb" /></>],
];
const primary = [
  ['Models', <><rect x="0" y="1" width="20" height="19" fill="#0b3fd3" /><path d="M4 8h8v8H4Zm0 0 3-3h8v8l-3 3m0-8 3-3" stroke="#e8efff" /></>],
  ['References', <><path d="M1 .5H13L19 7V19.500H1Z" fill="#fafafa" stroke="#888" /><path d="M4 3.500h7l3 3v9H4Z" fill="#8be9f7" stroke="#444" /><path d="M13 .5V7H19" fill="#fff" stroke="#444" /></>],
  ['Raster manager', <><rect y="2" width="20" height="16" fill="#fff" stroke="#777" /><path d="M0 1h20v4H0Z" fill="#d48a5b" /><path d="M2 7h8v9H2Z" fill="#0970d7" /><path d="M6 7h4v5H6Z" fill="#24ba6f" /><Form x={11} y={10} /></>],
  ['Point clouds', <><path d="M1 14C0 11 2 10 4 9 4 4 8 2 12 3S17 6 17 9C20 11 20 16 16 16H11L8 17Z" fill="#91b8da" stroke="#5c6f80" /><circle cx="5" cy="12" r="3.500" fill="#eb91b8" /><circle cx="8" cy="7" r="3.500" fill="#86d8b7" /><circle cx="15" cy="13" r="3" fill="#999" /><circle cx="13" cy="8" r="3" fill="#8cb4ee" /><path d="M5 9L9 11 12 9M9 4L10 8 9 15M13 4L12 9 17 10M12 9L13 15M2 12L6 13" stroke="#5c7f98" strokeWidth=".7" /></>],
  ['Saved images', <><rect x=".5" y=".5" width="19" height="19" fill="#666" stroke="#222" /><circle cx="10" cy="10" r="9" fill="#dff7fb" /><path d="M3 12l4-3 3 2 4-5 4 6Z" fill="#d18e10" /><path d="M2 13H18C15 20 5 20 2 13Z" fill="#cdedcf" /></>],
  ['Level manager', <><Stack top="#6fd07c" fill="#78d6e6" /><Form x={11} y={9} /></>],
  ['Level display', <Stack top="#fff09a" fill="#f7e77e" s="#776d35" />],
];

const Book = () => <Svg w={23} h={22}><path d="M5 3L18 1 19 12 8 15Z" fill="#54a8f4" stroke="#2a7ce0" /><path d="M1 12L8 9 12 15 22 11 23 13 12 19 6 18Z" fill="#a9d2fb" stroke="#1263d8" strokeWidth="1.200" /><path d="M5 10C8 6 15 4 19 7 15 7 18 10 15 12 11 14 8 13 5 10Z" fill="#111" /></Svg>;
const TasksIcon = () => <Svg w={15} h={14}><path d="M1 10L4 9H14V12L1 13Z" fill="#3b79dd" /><circle cx="7" cy="5" r="3.500" fill="#a5d2f6" stroke="#5585bd" /><path d="M3 11C4 7 12 5 13 11Z" fill="#78aef0" /></Svg>;
const Folder = () => <Svg w={17} h={16}><path d="M1 1h5l1 2h3v7H1Z" fill="#ffc435" stroke="#cf8712" /><path d="M5 4h5l1 1h4v7H5Z" fill="#ffd860" stroke="#cf8712" /><circle cx="10" cy="9" r="3" fill="#52c4ef" stroke="#2373b5" /><path d="M12 11l3 4" stroke="#e07a18" strokeWidth="2" /></Svg>;
const Chevron = ({ up }) => <Svg w={13} h={9}><path d={up ? 'M1.500 7L6.500 2 11.500 7' : 'M1.500 2L6.500 7 11.500 2'} stroke="#333" strokeWidth="3.500" /></Svg>;
const Win = () => <Svg w={19} h={19}><path d="M.5.5H14L18.500 5V18.500H.5Z" fill="#d4dde8" stroke="#fff" /><rect x="5" y="5" width="9" height="9" fill="#4a494b" /></Svg>;
const Lens = ({ sign }) => <><path d="M8 8l5 6" stroke="#d9823a" strokeWidth="2.500" /><circle cx="6" cy="5.500" r="4.500" fill="#c9ecff" stroke="#6890b8" />{sign && <path d={sign} stroke="#000" strokeWidth="1.500" />}</>;
const viewTools = [
  ['View attributes', <><rect x="1" y="1.500" width="11" height="10" fill="#fff" stroke="#666" /><path d="M1 2h11" stroke="#5173c7" strokeWidth="2" /><rect x="6" y="6" width="9" height="9" fill="#fff7a9" stroke="#2d73cf" /><path d="M8 9h5M8 12h5" stroke="#2d73cf" /></>],
  'v',
  ['Display style', <><path d="M1 8L7 1 15 3 12 10 6 14 1 12Z" fill="#57b7ee" stroke="#1c73bb" /><path d="M4 9C5 3 12 3 12 7S6 13 5 9 10 5 9 8" stroke="#fff" /><path d="M13 14h4l-2 2z" fill="#000" /></>],
  ['Brightness', <><path d="M8 0V16M0 8H16M2 2L14 14M2 14L14 2" stroke="#555" /><circle cx="8" cy="8" r="4.500" fill="#8cd0df" stroke="#3b7c92" /><circle cx="7" cy="6.500" r="2" fill="#e9faff" /></>],
  'v', 's',
  ['Update view', <><path d="M8 1V8" stroke="#963129" strokeWidth="2.500" /><path d="M4 8h8v3H4Z" fill="#b33225" stroke="#70251d" /><path d="M3 11h10l1 4H2Z" fill="#ccd7e0" stroke="#555" /></>],
  ['Zoom in', <Lens sign="M6 3.500v4M4 5.500h4" />],
  ['Zoom out', <Lens sign="M4 5.500h4" />],
  ['Window area', <><rect x="2.500" y="1.500" width="12" height="13" stroke="#333" strokeDasharray="2 1" /><Lens /></>],
  ['Fit view', <><rect x="1" y="1.500" width="14" height="13" fill="#eee" stroke="#444" strokeWidth="1.500" /><path d="M8 3V13M3 8H13M6 5l2-2 2 2M6 11l2 2 2-2M5 6L3 8l2 2M11 6l2 2-2 2" stroke="#111" /></>],
  ['Rotate view', <><path d="M5 11C1 10 2 6 6 5" stroke="#5cb0e8" strokeWidth="2.500" /><path d="M11 4C15 7 13 11 9 12" stroke="#1b5aa8" strokeWidth="2.500" /><path d="M7 7v9l4-4.500ZM6 6L11 1l3 5Z" fill="#2c80d0" /></>],
  ['Pan view', <g transform="translate(-1 -1) scale(.5)">{Hand}</g>],
  's',
  ['View previous', <><rect x=".5" y="2.500" width="15" height="11" fill="#fff" stroke="#555" /><path d="M5 10Q5 6 12 5M4 7v4h4" stroke="#222" /></>],
  ['View next', <><rect x=".5" y="2.500" width="15" height="11" fill="#fff" stroke="#555" /><path d="M4 6Q10 4 12 10M8 10h4V7" stroke="#222" /></>],
  's',
  ['Copy view', <><rect x="8" y="1.500" width="7" height="5" fill="#fff" stroke="#444" /><rect x="1" y="9.500" width="7" height="5" fill="#fff" stroke="#444" /><path d="M10 13h2V9M10 10l2-2 2 2" stroke="#222" /></>],
  ['View rotation', <><path d="M2 3l4-2 5 2v5L7 10 2 8ZM2 3l5 2 4-2M7 5v5" fill="#bce0fb" stroke="#1e63c7" /><path d="M4 15l7-5M6 9l6 6" stroke="#222" strokeWidth="1.500" /><path d="M12 14h5l-2 2z" fill="#000" /></>],
  ['Clip volume', <><rect x="1" y="1.500" width="11" height="9" rx="2" fill="#eaf2ff" stroke="#2c63c4" /><path d="M7 8l4-2 4 2v5l-4 2-4-2Z" fill="#666" stroke="#333" /><path d="M7 8l4 1 4-1" stroke="#ccc" /></>],
];

/* ---------- sign drawing ---------- */
const HDim = ({ y, stops, labels }) => (
  <g>
    {labels.map((t, i) => {
      const a = stops[i]; const b = stops[i + 1]; const m = Math.round((a + b) / 2); const g = t.length * 4 + 4;
      return (
        <g key={i}>
          <path d={`M${a} ${y}H${m - g}M${m + g} ${y}H${b}M${a + 6} ${y - 3}L${a} ${y}l6 3M${b - 6} ${y - 3}L${b} ${y}l-6 3`} />
          {i > 0 && <path d={`M${a} ${y - 15}V${y + 4}`} />}
          <text x={m} y={y + 6} textAnchor="middle" fill="#ddd" stroke="none">{t}</text>
        </g>
      );
    })}
  </g>
);
const VDim = ({ x, stops, labels }) => (
  <g>
    {labels.map((t, i) => {
      const a = stops[i]; const b = stops[i + 1]; const m = Math.round((a + b) / 2); const g = t.length > 2 ? 13 : t.length * 4 + 4;
      return (
        <g key={i}>
          <path d={`M${x} ${a}V${m - g}M${x} ${m + g}V${b}M${x - 3} ${a + 6}L${x} ${a}l3 6M${x - 3} ${b - 6}L${x} ${b}l3-6`} />
          {i > 0 && <path d={`M${x - 15} ${a}H${x + 4}`} />}
          <text x={x} y={m} dy="6" textAnchor="middle" fill="#ddd" stroke="none" transform={`rotate(-90 ${x} ${m})`}>{t}</text>
        </g>
      );
    })}
  </g>
);
const Sign = () => (
  <svg width="510" height="460" viewBox="430 235 510 460" role="img" aria-label="Sign R2-5P drawing">
    <rect x="434" y="244" width="445" height="333" rx="28" fill="#fff" />
    <rect x="446.5" y="256.500" width="420" height="308" rx="15" fill="#fff" stroke="#001c00" strokeWidth="11" />
    <g fontFamily='"Roboto Condensed", Roboto, sans-serif' fontWeight="bold" fontSize="77" textAnchor="middle" fill="#001c00">
      <text x="656" y="346">UNLESS</text><text x="656" y="438">OTHERWISE</text><text x="656" y="531">POSTED</text>
    </g>
    <g stroke="#fff" fill="none" fontSize="16" fontFamily='"Liberation Sans", Arial, sans-serif'>
      <path d="M881 243.500H934M881 577.500H934M434.500 580V692M878.500 580V692" />
      <VDim x={901.5} stops={[244, 290.5, 345.5, 382.5, 438.5, 475.5, 531.5, 577]} labels={['2.5', '3', '2', '3', '2', '3', '2.5']} />
      <VDim x={930.5} stops={[244, 577]} labels={['18']} />
      <HDim y={599.5} stops={[434.5, 523.5, 789.5, 878.5]} labels={['4.8', '14.4', '4.8']} />
      <HDim y={629.5} stops={[434.5, 470.5, 841.5, 878.5]} labels={['2', '20', '2']} />
      <HDim y={658.5} stops={[434.5, 526.5, 786.5, 878.5]} labels={['5', '14', '5']} />
      <HDim y={688.5} stops={[434.5, 878.5]} labels={['24']} />
    </g>
  </svg>
);

const menus = [['', 'F', 'ile'], ['', 'E', 'dit'], ['E', 'l', 'ement'], ['', 'S', 'ettings'], ['', 'T', 'ools'], ['', 'U', 'tilities'], ['Wor', 'k', 'space'], ['', 'A', 'pplications'], ['', 'W', 'indow'], ['', 'H', 'elp']];

export default function App() {
  return (
    <Page>
      <Global />
      <MenuBar>{menus.map(([a, u, b], i) => <MenuItem key={i} $active={i === 0}>{a}<u>{u}</u>{b}</MenuItem>)}</MenuBar>
      <ToolStrip>
        <Strip $pad={6}>
          <IconButton aria-label="Model"><Book /></IconButton>
          <IconButton $w={34} aria-label="Model list"><Caret w={10} /></IconButton>
          <Bar $m="0 0 0 -5px" />
          <SelectWrap $w={168} $gap={4} $c="#a5c3d8">
            <select aria-label="Active level name"><option>Default</option></select><Caret />
          </SelectWrap>
          <Bar $m="0 0 0 4px" />
          {attrs.map(([n, g], i) => (
            <React.Fragment key={n}>{i > 0 && <Bar />}<Attr aria-label={n}><Svg w={22} h={22}>{g}</Svg><span>0</span><Caret w={10} /></Attr></React.Fragment>
          ))}
        </Strip>
        <Strip $grow>
          <Grip $left={2} />
          <PrimaryRow>{primary.map(([n, g]) => <Drop key={n} aria-label={n}><Svg w={22} h={20}>{g}</Svg><Caret w={10} /></Drop>)}</PrimaryRow>
        </Strip>
      </ToolStrip>
      <Body>
        <Pane>
          <PaneTitle>
            <h2>Tasks</h2>
            <IconButton aria-label="Options"><Svg w={15} h={8}><path d="M0 0H15L7.500 8Z" fill="#000" /></Svg></IconButton>
            <IconButton aria-label="Pin"><Svg w={8} h={12}><path d="M2 .5H6V7H2ZM0 7.500H8M4 8V12M5.500 1V7" stroke="#000" /></Svg></IconButton>
            <IconButton $w={17} aria-label="Close"><Svg w={15} h={15}><path d="M1 1L14 14M14 1L1 14" stroke="#000" strokeWidth="3" /></Svg></IconButton>
          </PaneTitle>
          <Combo><TasksIcon /><select aria-label="Task list"><option>Tasks</option></select><i><Caret w={7} /></i></Combo>
          <Shelf>{shelf.map(([n, g], i) => <ShelfTool key={n} $on={i === 0} aria-label={n}><Svg>{g}</Svg><span>{i + 1}</span></ShelfTool>)}</Shelf>
          <Scroll>
            <Boxes>
              <BoxHead>
                <Svg w={15} h={16}><path d="M2 4L11 12" stroke="#333" /><N x={2} y={4} r={1.500} /><N x={11} y={13} r={1.500} /><g transform="translate(10 4) scale(.6)"><Bulb x={0} y={0} /></g></Svg>
                <h3>Drawing</h3>
                <HeadButton aria-label="Icons"><Svg w={13} h={13}><path d="M0 0h6v6H0ZM7 0h6v6H7ZM0 7h6v6H0ZM7 7h6v6H7Z" fill="#333" /></Svg></HeadButton>
                <HeadButton aria-label="List"><Svg w={13} h={11}><path d="M0 1.500H13M0 5.500H13M0 9.500H13" stroke="#333" strokeWidth="2" /></Svg></HeadButton>
                <HeadButton $on aria-label="Panel"><Svg w={13} h={13}><path d="M0 0H13V6H0ZM0 8H13V13H0Z" fill="#333" /></Svg></HeadButton>
                <HeadButton aria-label="Collapse"><Chevron up /></HeadButton>
              </BoxHead>
              <Groups>
                {groups.map(([k, list], i) => (
                  <Group key={k} $last={i === groups.length - 1}><Key>{k}</Key>
                    <Tools>{list.map(n => <Tool key={n} aria-label={n}><Svg>{icons[n]}</Svg></Tool>)}</Tools>
                  </Group>
                ))}
              </Groups>
              <Collapsed><Folder /><span>Drawing Composition</span><Chevron /></Collapsed>
              <Peek />
            </Boxes>
            <Track />
          </Scroll>
          <Tabs><Tab $on><TasksIcon />Tasks</Tab><Tab><Folder />Project Explorer</Tab></Tabs>
        </Pane>
        <Desk>
          <View $back><ViewTitle $back><Win /><h2>View 2, Default</h2></ViewTitle></View>
          <View>
            <ViewTitle><Win /><h2>View 1, Default</h2></ViewTitle>
            <ViewTools>
              {viewTools.map((t, i) => t === 's' ? <Bar key={i} $m="0 3px 0 2px" />
                : t === 'v' ? <IconButton key={i} $w={19} aria-label="More"><Caret /></IconButton>
                  : <IconButton key={i} aria-label={t[0]}><Svg w={16}>{t[1]}</Svg></IconButton>)}
            </ViewTools>
            <Canvas>
              <Sign />
              <Notes>
                <p>R2-5P_24x18;</p>
                <p>{'1.5"  Radius,  0.6"  Border,  0.4"  Indent,  Black  on  White;'}</p>
                <p>{'"UNLESS",    D  2K  specified  length;'}</p>
                <p>{'"OTHERWISE",    D  2K  specified  length;'}</p>
                <p>{'"POSTED",    D  2K  specified  length;'}</p>
              </Notes>
            </Canvas>
          </View>
        </Desk>
      </Body>
      <Status>
        <Strip $pad={5} $end={3} $top={2}>
          <IconButton aria-label="Back"><Svg w={20}><circle cx="10" cy="10" r="9.500" fill="#10a51b" stroke="#087011" /><path d="M16 10H5M10 4.500L4.500 10 10 15.500" stroke="#fff" strokeWidth="2.200" /></Svg></IconButton>
          <IconButton $w={26} aria-label="Back list"><Caret w={10} /></IconButton>
          <IconButton aria-label="Forward"><Svg w={20}><circle cx="10" cy="10" r="9.500" fill="#aaa" /><path d="M4 10H15M10 4.500L15.500 10 10 15.500" stroke="#eee" strokeWidth="2.200" /></Svg></IconButton>
          <IconButton $w={24} aria-label="Forward list"><Caret w={10} c="#777" /></IconButton>
          <IconButton aria-label="AccuDraw"><Svg w={22}><ellipse cx="11" cy="16" rx="10" ry="4.500" fill="#d9d9ef" stroke="#8888a8" strokeDasharray="2 1" /><path d="M6 1L13 15 6 13Z" fill="#eee2b8" stroke="#444" /><path d="M6 13L17 16" stroke="#333" /></Svg></IconButton>
          <IconButton $w={24} aria-label="AccuDraw list"><Caret w={10} /></IconButton>
          <SelectWrap $w={168} $c="#b5b5b5" $left={6}>
            <Svg w={17} h={14}><path d="M1 1.500H9V6.500H1ZM8 4.500H15V9.500H8ZM4 7.500H11V11.500H4Z" fill="#e8ebff" stroke="#444a68" /></Svg>
            <select aria-label="View group"><option>Default</option></select><Caret />
          </SelectWrap>
          <Bar $m="0 5px 0 4px" />
          <IconButton $w={23} aria-label="Manage view groups"><Svg w={22} h={18}><path d="M1 1.500H12V9.500H1Z" fill="#e8ebff" stroke="#444a68" /><path d="M5 12V17H14" stroke="#444a68" /><path d="M9 6.500H21V14.500H9Z" fill="#e8ebff" stroke="#444a68" /><path d="M1 2H12" stroke="#5276c7" strokeWidth="2" /></Svg></IconButton>
          <Bar $m="0 2px 0 5px" />
          {[1, 2, 3, 4, 5, 6, 7, 8].map(n => <ViewToggle key={n} $on={n < 3}>{n}</ViewToggle>)}
        </Strip>
        <Strip $pad={4} $end={14} $top={2}>
          <Grip $left={1} />
          <Coord $left={14}>X<input defaultValue="-12.3280" /></Coord>
          <Bar $m="0 0 0 7px" />
          <Coord $left={11}>Y<input defaultValue="12.5345" /></Coord>
        </Strip>
      </Status>
      <Foot />
    </Page>
  );
}
